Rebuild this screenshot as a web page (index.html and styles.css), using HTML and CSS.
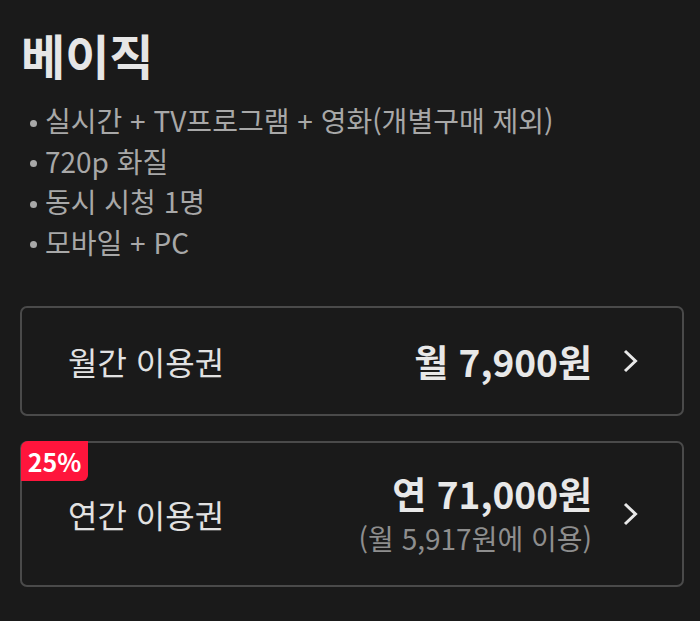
FILE: index.html
```html
<!DOCTYPE html>
<html lang="ko">
<head>
<meta charset="utf-8">
<link rel="stylesheet" href="styles.css">
</head>
<body>
<main class="page">
  <h1 class="title">베이직</h1>
  <ul class="features">
    <li><span class="dot"></span>실시간 + TV프로그램 + 영화(개별구매 제외)</li>
    <li><span class="dot"></span>720p 화질</li>
    <li><span class="dot"></span>동시 시청 1명</li>
    <li><span class="dot"></span>모바일 + PC</li>
  </ul>
  <div class="plans">
    <div class="plan plan-month">
      <span class="plan-name">월간 이용권</span>
      <div class="plan-price">
        <span class="price">월 7,900원</span>
      </div>
      <svg class="chev" width="15" height="24" viewBox="0 0 15 24"><polyline points="2,2 12.5,12 2,22" fill="none" stroke="#e8e8e8" stroke-width="3"/></svg>
    </div>
    <div class="plan plan-year">
      <span class="badge">25%</span>
      <span class="plan-name">연간 이용권</span>
      <div class="plan-price">
        <span class="price">연 71,000원</span>
        <span class="sub">(월 5,917원에 이용)</span>
      </div>
      <svg class="chev" width="15" height="24" viewBox="0 0 15 24"><polyline points="2,2 12.5,12 2,22" fill="none" stroke="#e8e8e8" stroke-width="3"/></svg>
    </div>
  </div>
</main>
</body>
</html>
```

FILE: styles.css
```css
html, body {
  margin: 0;
  padding: 0;
  background: #1a1a1a;
}
body {
  font-family: "Noto Sans CJK KR", "Noto Sans", sans-serif;
  color: #e6e6e6;
  width: 700px;
  height: 621px;
  overflow: hidden;
}
.page {
  padding: 24px 16px 0 20px;
}
.title {
  margin: 0 0 0 1px;
  font-size: 48px;
  font-weight: 700;
  line-height: 60px;
  color: #e6e6e6;
}
.features {
  list-style: none;
  margin: 16px 0 0 0;
  padding: 0;
}
.features li {
  display: flex;
  align-items: center;
  font-size: 28px;
  line-height: 40.5px;
  color: #a8a8a8;
}
.dot {
  width: 7px;
  height: 7px;
  border-radius: 50%;
  background: #a8a8a8;
  margin: 6px 8px 0 10px;
  flex: none;
}
.plans {
  margin-top: 44px;
  display: flex;
  flex-direction: column;
  gap: 25px;
}
.plan {
  position: relative;
  display: flex;
  align-items: center;
  border: 2px solid #4a4a4a;
  border-radius: 7px;
  padding: 0 44px 0 46px;
  box-sizing: border-box;
}
.plan-month {
  height: 110px;
}
.plan-year {
  height: 146px;
}
.plan-name {
  font-size: 32px;
  color: #e2e2e2;
  flex: 1;
}
.plan-price {
  display: flex;
  flex-direction: column;
  align-items: flex-end;
  margin-right: 31px;
}
.price {
  font-size: 37px;
  font-weight: 700;
  color: #e8e8e8;
  line-height: 44px;
}
.sub {
  font-size: 28px;
  color: #8e8e8e;
  line-height: 38px;
  margin-top: 4px;
}
.chev {
  display: block;
  flex: none;
}
.badge {
  position: absolute;
  top: -2px;
  left: -1px;
  width: 67px;
  height: 40px;
  background: #ff153c;
  color: #ffffff;
  font-size: 25px;
  font-weight: 700;
  line-height: 40px;
  text-align: center;
  border-radius: 7px 0 6px 0;
}
```
